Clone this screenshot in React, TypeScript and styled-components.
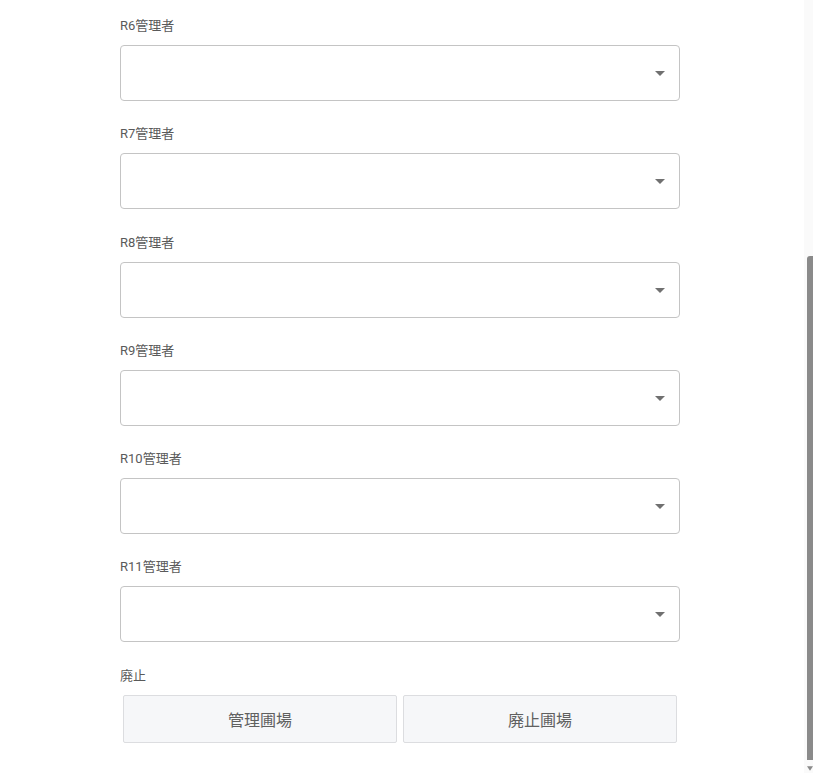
import React from "react";
import styled, { createGlobalStyle } from "styled-components";

const GlobalStyle = createGlobalStyle`
  body {
    margin: 0;
    background: #fff;
    font-family: Roboto, "Noto Sans CJK JP", sans-serif;
  }
`;

const managers = ["R6", "R7", "R8", "R9", "R10", "R11"];

const App = () => {
  return (
    <>
      <GlobalStyle />
      <Page>
        <Form>
          {managers.map((r) => (
            <Field key={r}>
              <Label>{r}管理者</Label>
              <SelectBox>
                <ArrowIcon viewBox="0 0 24 24">
                  <path d="M7 10l5 5 5-5z" />
                </ArrowIcon>
              </SelectBox>
            </Field>
          ))}
          <Field>
            <Label>廃止</Label>
            <ButtonRow>
              <ToggleButton type="button">管理圃場</ToggleButton>
              <ToggleButton type="button">廃止圃場</ToggleButton>
            </ButtonRow>
          </Field>
        </Form>
      </Page>
      {/* browser scrollbar of the original page */}
      <ScrollTrack>
        <ScrollThumb />
        <ScrollArrow viewBox="0 0 8 6">
          <path d="M0 0h8L4 6z" />
        </ScrollArrow>
      </ScrollTrack>
    </>
  );
};

export default App;

const Page = styled.div`
  padding: 19px 0 32px 120px;
`;

const Form = styled.div`
  width: 560px;
  display: flex;
  flex-direction: column;
  gap: 26.25px;
`;

const Field = styled.div`
  display: flex;
  flex-direction: column;
  gap: 12px;
`;

const Label = styled.div`
  font-size: 13px;
  line-height: 14px;
  color: #5a5a5a;
`;

const SelectBox = styled.div`
  height: 56px;
  box-sizing: border-box;
  border: 1px solid #c4c4c4;
  border-radius: 4px;
  display: flex;
  align-items: center;
  justify-content: flex-end;
  padding-right: 7px;
`;

const ArrowIcon = styled.svg`
  width: 24px;
  height: 24px;
  fill: #707070;
`;

const ButtonRow = styled.div`
  display: grid;
  grid-template-columns: 1fr 1fr;
  gap: 6px;
  padding: 0 3px;
`;

const ToggleButton = styled.button`
  height: 48px;
  background: #f6f7f9;
  border: 1px solid #dcdde0;
  border-radius: 2px;
  font-family: Roboto, "Noto Sans CJK JP", sans-serif;
  font-size: 16px;
  color: #606060;
  cursor: pointer;
`;

const ScrollTrack = styled.div`
  position: fixed;
  top: 0;
  right: 0;
  width: 9px;
  height: 100vh;
  background: #fafafa;
  display: flex;
  flex-direction: column;
  align-items: flex-end;
`;

const ScrollThumb = styled.div`
  margin-top: 256px;
  width: 6px;
  height: 504px;
  background: #8a8a8a;
  border-radius: 3px 0 0 0;
`;

const ScrollArrow = styled.svg`
  margin-top: 6px;
  width: 6px;
  height: 5px;
  fill: #8a8a8a;
`;
